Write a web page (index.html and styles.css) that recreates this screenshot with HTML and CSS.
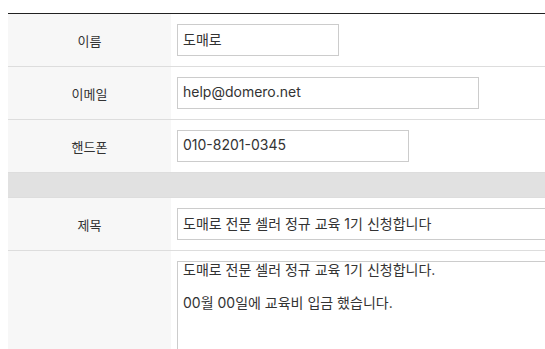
FILE: index.html
```html
<!DOCTYPE html>
<html lang="ko">
<head>
    <meta charset="UTF-8">
    <title>교육 신청</title>
    <link rel="stylesheet" href="styles.css">
</head>
<body>
    <table class="form-table">
        <tr>
            <th>이름</th>
            <td><input type="text" class="input-short" value="도매로"></td>
        </tr>
        <tr>
            <th>이메일</th>
            <td><input type="text" class="input-long" value="help@domero.net"></td>
        </tr>
        <tr>
            <th>핸드폰</th>
            <td><input type="text" class="input-mid" value="010-8201-0345"></td>
        </tr>
        <tr class="spacer-row">
            <td colspan="2"></td>
        </tr>
        <tr>
            <th>제목</th>
            <td><input type="text" class="input-full" value="도매로 전문 셀러 정규 교육 1기 신청합니다"></td>
        </tr>
        <tr>
            <th></th>
            <td class="area-cell"><textarea class="content">도매로 전문 셀러 정규 교육 1기 신청합니다.

00월 00일에 교육비 입금 했습니다.</textarea></td>
        </tr>
    </table>
</body>
</html>
```

FILE: styles.css
```css
html, body {
    overflow: hidden;
}

body {
    margin: 13px 0 0 8px;
    background-color: #fff;
    font-family: Inter, "Noto Sans CJK KR", sans-serif;
    font-size: 13px;
    color: #333;
}

.form-table {
    width: 780px;
    border-collapse: collapse;
    border-top: 1px solid #222;
}

.form-table th,
.form-table td {
    border-bottom: 1px solid #ddd;
    padding: 10px 6px;
    height: 32px;
}

.form-table th {
    width: 151px;
    background-color: #f7f7f7;
    font-family: "Noto Sans CJK KR", sans-serif;
    font-weight: normal;
    text-align: center;
    color: #333;
}

.spacer-row td {
    height: 24px;
    padding: 0;
    background-color: #e1e1e1;
}

input[type="text"],
textarea {
    box-sizing: border-box;
    display: block;
    height: 32px;
    border: 1px solid #ccc;
    padding: 0 5px 3px;
    font-family: Inter, "Noto Sans CJK KR", sans-serif;
    font-size: 14px;
    color: #333;
    background-color: #fff;
    outline: none;
}

.input-short {
    width: 162px;
}

.input-long {
    width: 302px;
}

.input-mid {
    width: 232px;
}

.input-full {
    width: 100%;
}

.area-cell {
    vertical-align: top;
}

textarea.content {
    width: 100%;
    height: 160px;
    padding: 0 5px;
    line-height: 16.5px;
    resize: none;
}
```
